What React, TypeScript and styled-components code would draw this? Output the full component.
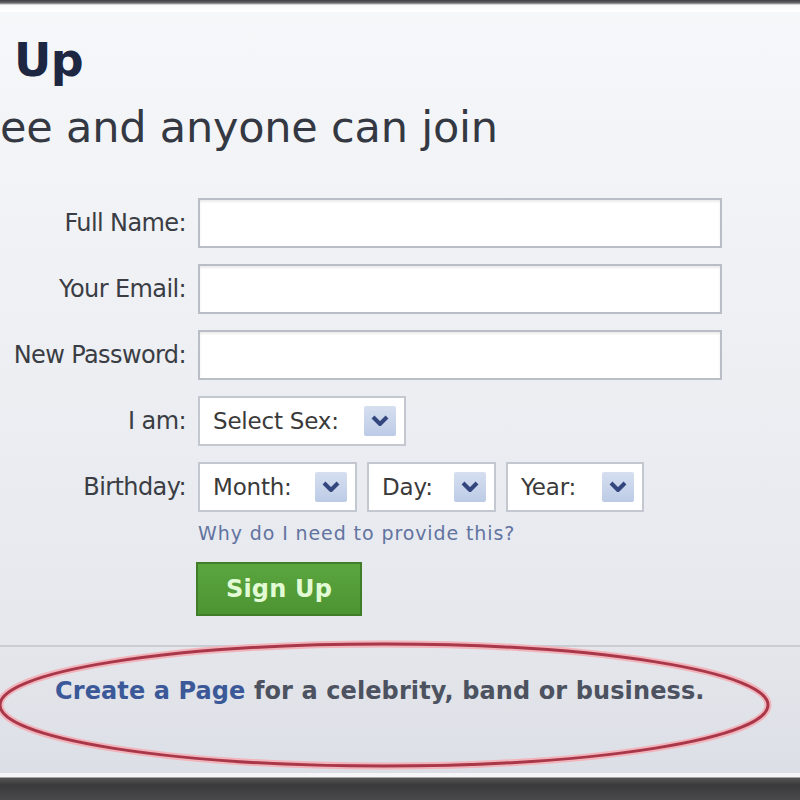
import styled, { createGlobalStyle } from "styled-components";

const colors = {
  ink: "#343842",
  navy: "#1d2742",
  label: "#3a3d44",
  link: "#3b5998",
  linkSoft: "#6273a0",
  border: "#b9bdc6",
  greenDark: "#3f7d29",
  footerText: "#4c5260",
};

const GlobalStyle = createGlobalStyle`
  html, body {
    margin: 0;
    padding: 0;
    background: #2f2f31;
  }
  * {
    box-sizing: border-box;
  }
`;

const Frame = styled.div`
  width: 800px;
  height: 800px;
  overflow: hidden;
  display: flex;
  flex-direction: column;
  font-family: "DejaVu Sans", Verdana, sans-serif;
`;

const Edge = styled.div<{ $bottom?: boolean }>`
  flex: none;
  height: ${(p) => (p.$bottom ? "27px" : "12px")};
  background: ${(p) =>
    p.$bottom
      ? "linear-gradient(#f6f6f8 0, #f6f6f8 4px, #555 5px, #3a3a3c 12px, #4a4a4c 100%)"
      : "linear-gradient(#3c3c3e 0, #6a6a6c 3px, #f9f9fa 5px, #ffffff 100%)"};
`;

const Panel = styled.div`
  flex: 1;
  display: flex;
  flex-direction: column;
  background: linear-gradient(#f6f7f9 0%, #eef0f4 40%, #e1e4ea 100%);
`;

const Header = styled.header`
  padding: 20px 0 0 14px;
  height: 186px;
`;

const Title = styled.h1`
  margin: 0;
  font-size: 46px;
  line-height: 56px;
  font-weight: 700;
  color: ${colors.navy};
  letter-spacing: -0.5px;
`;

const Subtitle = styled.h2`
  margin: 9px 0 0 -14px;
  font-size: 43px;
  line-height: 60px;
  font-weight: 400;
  color: ${colors.ink};
  letter-spacing: -0.2px;
`;

const Form = styled.form`
  display: grid;
  grid-template-columns: 186px 524px;
  column-gap: 12px;
  row-gap: 16px;
  align-items: center;
`;

const Label = styled.label`
  text-align: right;
  font-size: 24px;
  color: ${colors.label};
  letter-spacing: -0.6px;
  white-space: nowrap;
`;

const TextInput = styled.input`
  width: 524px;
  height: 50px;
  background: #fff;
  border: 2px solid ${colors.border};
  box-shadow: inset 0 2px 2px rgba(0, 0, 0, 0.08);
  outline: none;
`;

const SelectRow = styled.div`
  display: flex;
  gap: 10px;
`;

const Select = styled.div<{ $width: number }>`
  width: ${(p) => p.$width}px;
  height: 50px;
  background: #fff;
  border: 2px solid #c3c7cf;
  display: flex;
  align-items: center;
  justify-content: space-between;
  padding: 0 8px 0 13px;
  font-size: 23px;
  color: #3a3a3a;
  letter-spacing: -0.2px;
`;

const ArrowBox = styled.span`
  width: 32px;
  height: 30px;
  background: linear-gradient(#d6dff0, #bccbe6);
  border-radius: 2px;
  display: flex;
  align-items: center;
  justify-content: center;
`;

const Spacer = styled.div``;

const HelpLink = styled.a`
  margin-top: -6px;
  font-size: 19px;
  color: ${colors.linkSoft};
  letter-spacing: 0.9px;
`;

const SignUpButton = styled.button`
  width: 166px;
  height: 54px;
  margin-top: 2px;
  margin-left: -2px;
  background: linear-gradient(#5aa63f, #4d9433);
  border: 2px solid ${colors.greenDark};
  color: #e3fbd4;
  font-family: inherit;
  font-size: 24px;
  font-weight: 700;
  letter-spacing: 0.2px;
  justify-self: start;
`;

const Footer = styled.footer`
  position: relative;
  margin-top: auto;
  height: 128px;
  border-top: 2px solid #c9ccd3;
  background: linear-gradient(#e4e6eb, #dcdfe6);
  display: flex;
  align-items: flex-start;
  padding: 30px 0 0 55px;
`;

const FooterText = styled.p`
  margin: 0;
  font-size: 24px;
  font-weight: 700;
  color: ${colors.footerText};
  letter-spacing: 0.1px;
`;

const PageLink = styled.span`
  color: ${colors.link};
`;

const Highlight = styled.svg`
  position: absolute;
  left: -4px;
  top: -8px;
  pointer-events: none;
`;

const Chevron = () => (
  <svg width="18" height="14" viewBox="0 0 18 14">
    <path d="M2 3 L9 10 L16 3" fill="none" stroke="#34467e" strokeWidth="4" strokeLinejoin="round" />
  </svg>
);

const Dropdown = ({ label, width }: { label: string; width: number }) => (
  <Select $width={width}>
    <span>{label}</span>
    <ArrowBox>
      <Chevron />
    </ArrowBox>
  </Select>
);

function App() {
  return (
    <Frame>
      <GlobalStyle />
      <Edge />
      <Panel>
        <Header>
          <Title>Up</Title>
          <Subtitle>ee and anyone can join</Subtitle>
        </Header>
        <Form>
          <Label>Full Name:</Label>
          <TextInput />
          <Label>Your Email:</Label>
          <TextInput />
          <Label>New Password:</Label>
          <TextInput type="password" />
          <Label>I am:</Label>
          <SelectRow>
            <Dropdown label="Select Sex:" width={208} />
          </SelectRow>
          <Label>Birthday:</Label>
          <SelectRow>
            <Dropdown label="Month:" width={159} />
            <Dropdown label="Day:" width={129} />
            <Dropdown label="Year:" width={138} />
          </SelectRow>
          <Spacer />
          <HelpLink>Why do I need to provide this?</HelpLink>
          <Spacer />
          <SignUpButton type="button">Sign Up</SignUpButton>
        </Form>
        <Footer>
          <Highlight width="782" height="134" viewBox="0 0 782 134">
            <ellipse cx="388" cy="66" rx="384" ry="61" fill="none" stroke="#f2b3ba" strokeWidth="7" />
            <ellipse cx="388" cy="66" rx="384" ry="61" fill="none" stroke="#a8374a" strokeWidth="3" />
          </Highlight>
          <FooterText>
            <PageLink>Create a Page</PageLink> for a celebrity, band or business.
          </FooterText>
        </Footer>
      </Panel>
      <Edge $bottom />
    </Frame>
  );
}

export default App;
